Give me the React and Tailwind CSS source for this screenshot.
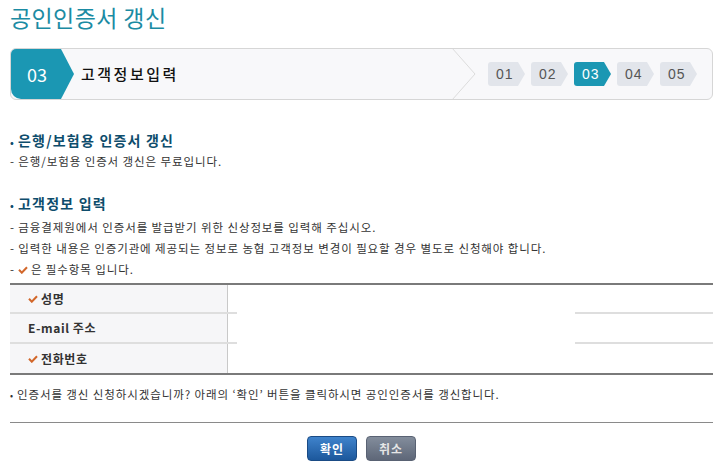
import React from 'react';

const steps = ['01', '02', '03', '04', '05'];

const Check = () => (
  <svg width="10" height="8" viewBox="0 0 10 8" className="shrink-0">
    <path d="M1 3.8l2.8 2.9L9 1.2" fill="none" stroke="#d2672a" strokeWidth="2" />
  </svg>
);

const Row = ({ required, label, h }) => (
  <div className={`flex ${h}`}>
    <div className="w-[218px] bg-[#f6f6f8] border-r border-[#c9c9c9] flex items-center gap-[3px] pl-[18px] text-[12px] font-semibold tracking-[0.6px] text-[#333]">
      {required && <Check />}
      <span>{label}</span>
    </div>
    <div className="flex-1" />
  </div>
);

const Divider = () => (
  <div className="flex h-[2px]">
    <div className="w-[227px] bg-[#dedede]" />
    <div className="flex-1" />
    <div className="w-[138px] bg-[#dedede]" />
  </div>
);

export default function App() {
  return (
    <div className="w-[720px] h-[468px] bg-white text-[#333] font-['Noto_Sans_CJK_KR','Noto_Sans',sans-serif] overflow-hidden">
      <div className="w-[703px] ml-[10px]">
        <h1 className="text-[23px] leading-[34px] text-[#1b8ba3] tracking-[0.4px]">공인인증서 갱신</h1>

        {/* step bar */}
        <div className="mt-[14px] h-[52px] flex items-center rounded-[6px] border border-[#d6d6d6] bg-[#f8f8fa] overflow-hidden">
          <div className="h-full w-[63px] bg-[#1b97b3] flex items-center pl-[16px] text-[18px] text-white [clip-path:polygon(0_0,50px_0,63px_50%,50px_100%,0_100%)] rounded-bl-[10px]">
            03
          </div>
          <div className="flex-1 pl-[7px] text-[15px] font-medium tracking-[2.5px] text-[#111]">고객정보입력</div>
          <svg width="24" height="52" viewBox="0 0 24 52" className="shrink-0">
            <path d="M0 0L23 26L0 52" fill="none" stroke="#dcdcdc" strokeWidth="1" />
          </svg>
          <div className="flex gap-[6px] ml-[12px] mr-[15px]">
            {steps.map((s) => (
              <div
                key={s}
                className={`h-[24px] w-[37px] pl-[8px] flex items-center text-[14px] tracking-[1px] font-['Liberation_Sans',sans-serif] rounded-l-[3px] [clip-path:polygon(0_0,30px_0,37px_50%,30px_100%,0_100%)] ${
                  s === '03' ? 'bg-[#1b97b3] text-white' : 'bg-[#e2e5eb] text-[#555]'
                }`}
              >
                {s}
              </div>
            ))}
          </div>
        </div>

        {/* section 1 */}
        <h2 className="mt-[31px] text-[14px] leading-[18px] font-bold text-[#0e4d6c] tracking-[1.2px]">
          <span className="text-[10px] mr-[3px]">•</span>은행/보험용 인증서 갱신
        </h2>
        <p className="text-[11.5px] leading-[21px] tracking-[0.9px]">- 은행/보험용 인증서 갱신은 무료입니다.</p>

        {/* section 2 */}
        <h2 className="mt-[22px] text-[14px] leading-[18px] font-bold text-[#0e4d6c] tracking-[1.2px]">
          <span className="text-[10px] mr-[3px]">•</span>고객정보 입력
        </h2>
        <div className="mt-[3px] text-[11.5px] leading-[21px] tracking-[0.9px]">
          <p>- 금융결제원에서 인증서를 발급받기 위한 신상정보를 입력해 주십시오.</p>
          <p>- 입력한 내용은 인증기관에 제공되는 정보로 농협 고객정보 변경이 필요할 경우 별도로 신청해야 합니다.</p>
          <p className="flex items-center gap-[3px]">
            <span>-</span>
            <Check />
            <span>은 필수항목 입니다.</span>
          </p>
        </div>

        {/* table */}
        <div className="mt-[3px] border-t-2 border-b-2 border-[#7a7a7a]">
          <Row required label="성명" h="h-[27px]" />
          <Divider />
          <Row label="E-mail 주소" h="h-[28px]" />
          <Divider />
          <Row required label="전화번호" h="h-[29px]" />
        </div>

        <p className="mt-[9px] text-[11.5px] leading-[21px] tracking-[0.9px]">
          <span className="text-[9px] mr-[3px]">•</span>인증서를 갱신 신청하시겠습니까? 아래의 ‘확인’ 버튼을 클릭하시면 공인인증서를 갱신합니다.
        </p>

        <div className="mt-[16px] border-t border-[#8a8a8a]" />

        <div className="mt-[13px] flex justify-center gap-[9px]">
          <button className="w-[50px] h-[25px] rounded-[4px] border border-[#1a4b85] bg-gradient-to-b from-[#3f83cc] to-[#1c589c] text-white text-[12px] font-bold tracking-[1px]">
            확인
          </button>
          <button className="w-[50px] h-[25px] rounded-[4px] border border-[#596273] bg-gradient-to-b from-[#838d9c] to-[#5e6778] text-[#e6e6e6] text-[12px] font-bold tracking-[1px]">
            취소
          </button>
        </div>
      </div>
    </div>
  );
}
